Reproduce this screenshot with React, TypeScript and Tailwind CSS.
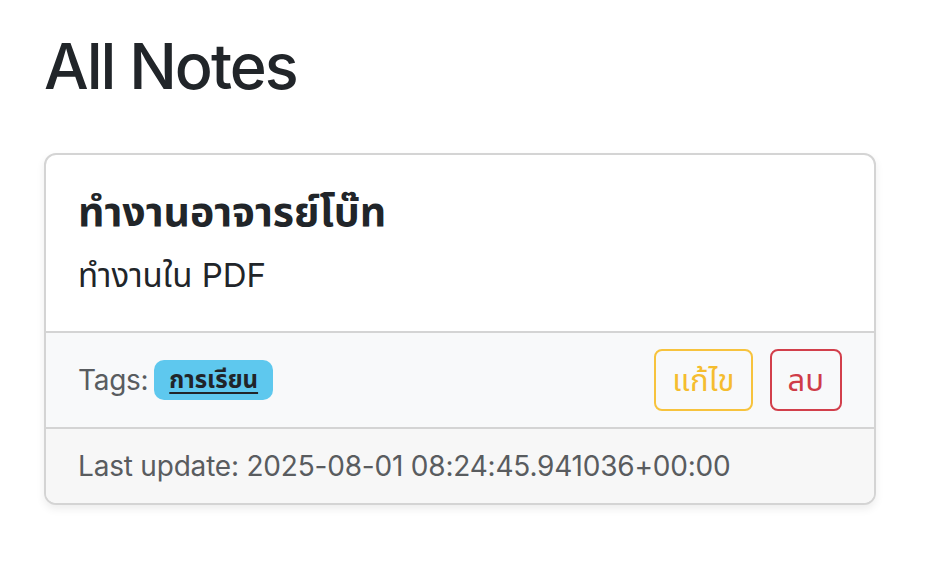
import React from "react";

export default function App() {
  return (
    <div className="min-h-[578px] w-[938px] bg-white text-[#212529] [font-family:Inter,'Noto_Sans_Thai','Noto_Sans',sans-serif]">
      <div className="pl-[44px] pt-[28px]">
        <h1 className="text-[63px] font-medium leading-[77px] mb-[48px] tracking-[-2px]">All Notes</h1>
        <div className="w-[832px] rounded-[12px] border-2 border-[#d4d4d4] shadow-[0_4px_8px_rgba(0,0,0,0.075)] overflow-hidden bg-white">
          <div className="px-[32px] pt-[32px] pb-[32px]">
            <h5 className="text-[41px] font-bold leading-[48px] mb-[16px]">ทำงานอาจารย์โบ๊ท</h5>
            <p className="text-[33px] leading-[48px]">ทำงานใน PDF</p>
          </div>
          <div className="border-t-2 border-[#d4d4d4] bg-[#f8f9fa] px-[32px] py-[16px] flex items-center justify-between">
            <div className="flex items-center text-[28px] text-[#595c5f] tracking-[-0.3px]">
              <span>Tags:</span>
              <span className="ml-[6px] inline-flex items-center h-[40px] px-[15px] rounded-[10px] bg-[#5ec8ee]">
                <a className="text-[24px] font-bold text-[#212529] underline underline-offset-[4px] decoration-2 leading-none tracking-normal">การเรียน</a>
              </span>
            </div>
            <div className="flex items-center gap-[17px]">
              <button className="h-[62px] px-[16px] rounded-[8px] border-2 border-[#f7c33d] text-[#f5bd2f] text-[31px] leading-[42px]">แก้ไข</button>
              <button className="h-[62px] px-[16px] rounded-[8px] border-2 border-[#d23f4b] text-[#cf3c48] text-[31px] leading-[42px]">ลบ</button>
            </div>
          </div>
          <div className="border-t-2 border-[#d4d4d4] bg-[#f7f7f7] px-[32px] py-[16px]">
            <span className="text-[28px] leading-[42px] text-[#595c5f] tracking-[-0.2px]">Last update: 2025-08-01 08:24:45.941036+00:00</span>
          </div>
        </div>
      </div>
    </div>
  );
}
